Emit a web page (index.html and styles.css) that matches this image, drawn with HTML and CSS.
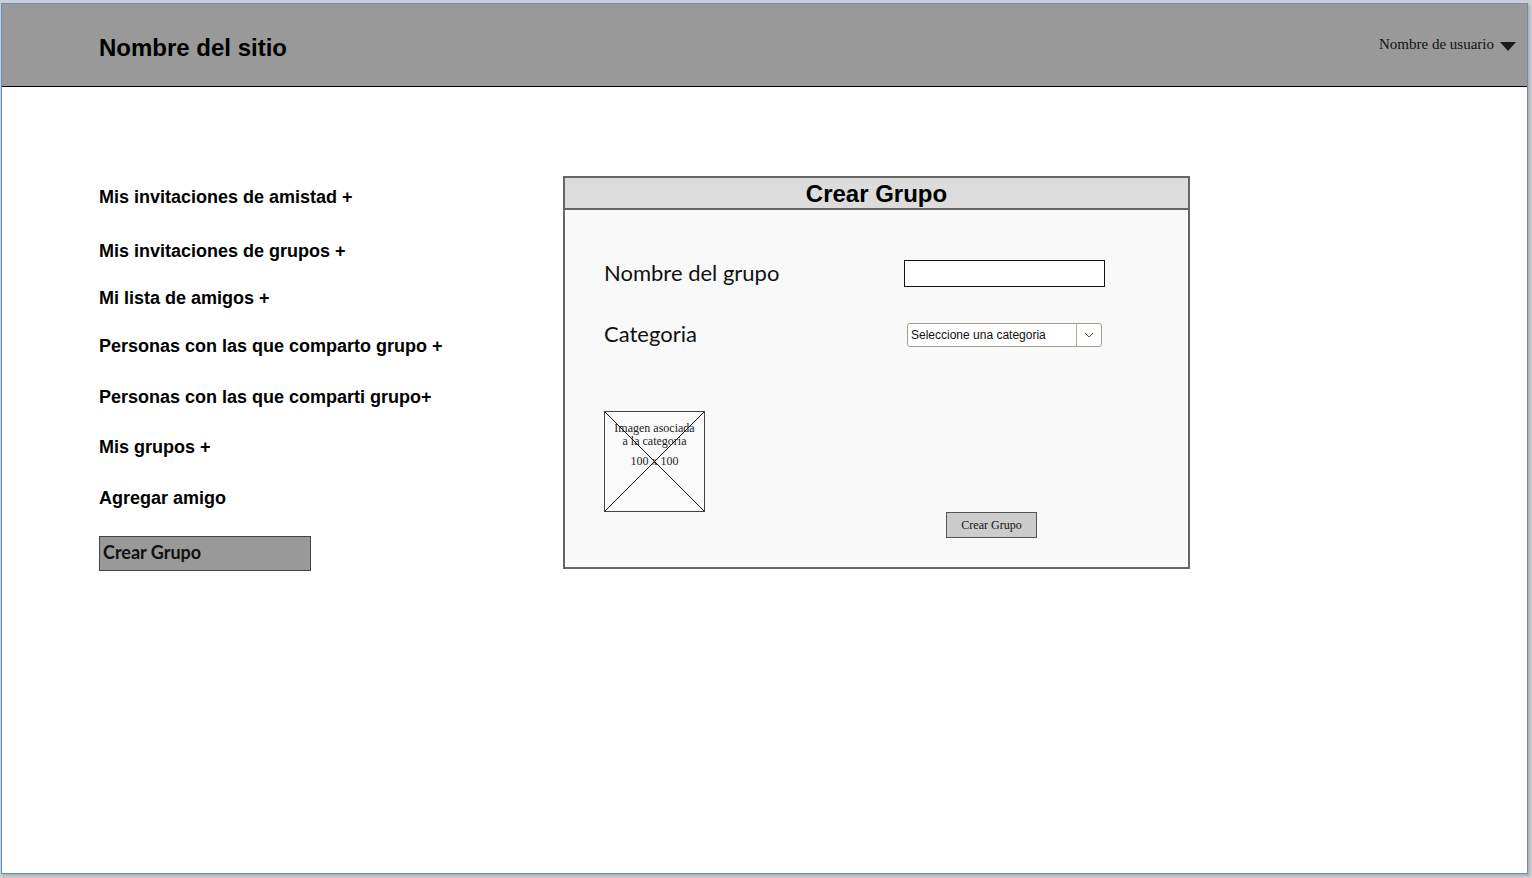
FILE: index.html
```html
<!DOCTYPE html>
<html lang="es">
<head>
<meta charset="utf-8">
<title>Crear Grupo</title>
<link rel="stylesheet" href="styles.css">
</head>
<body>
<div class="window">
  <header class="topbar">
    <div class="site-name">Nombre del sitio</div>
    <div class="user">
      <span class="user-name">Nombre de usuario</span>
      <span class="caret"></span>
    </div>
  </header>
  <main class="main">
    <nav class="nav">
      <div class="nav-item gap-32">Mis invitaciones de amistad +</div>
      <div class="nav-item gap-25">Mis invitaciones de grupos +</div>
      <div class="nav-item gap-26">Mi lista de amigos +</div>
      <div class="nav-item gap-29">Personas con las que comparto grupo +</div>
      <div class="nav-item gap-28">Personas con las que comparti grupo+</div>
      <div class="nav-item gap-29">Mis grupos +</div>
      <div class="nav-item gap-27">Agregar amigo</div>
      <div class="nav-active">Crear Grupo</div>
    </nav>
    <section class="panel">
      <div class="panel-head">Crear Grupo</div>
      <div class="panel-body">
        <div class="row">
          <div class="label">Nombre del grupo</div>
          <div class="input"></div>
        </div>
        <div class="row row-select">
          <div class="label label-wide">Categoria</div>
          <div class="select">
            <span class="select-text">Seleccione una categoria</span>
            <span class="select-btn">
              <svg width="10" height="6" viewBox="0 0 10 6"><path d="M1 1 L5 5 L9 1" fill="none" stroke="#555" stroke-width="1"/></svg>
            </span>
          </div>
        </div>
        <div class="row-bottom">
          <div class="placeholder">
            <svg class="ph-x" width="99" height="99" viewBox="0 0 99 99" preserveAspectRatio="none"><path d="M0 0 L99 99 M99 0 L0 99" stroke="#111" stroke-width="1" fill="none"/></svg>
            <div class="ph-text">Imagen asociada<br>a la categoria</div>
            <div class="ph-size">100 x 100</div>
          </div>
          <div class="btn">Crear Grupo</div>
        </div>
      </div>
    </section>
  </main>
</div>
</body>
</html>
```

FILE: styles.css
```css
html, body {
  margin: 0;
  padding: 0;
}
body {
  background: #cfcfcf;
  width: 1532px;
  height: 878px;
  overflow: hidden;
}
.window {
  margin: 3px 0 0 1px;
  width: 1527px;
  height: 871px;
  box-sizing: border-box;
  border: 1px solid #5f8fc8;
  background: #ffffff;
  box-shadow: 2px 2px 2px #b0b0b0;
}
.topbar {
  height: 82px;
  border-bottom: 1px solid #000;
  background: #999999;
  display: flex;
  justify-content: space-between;
  align-items: center;
  padding: 0 11px 0 97px;
}
.site-name {
  font-family: "Liberation Sans", Arial, sans-serif;
  font-weight: bold;
  font-size: 24px;
  color: #000;
  padding-top: 6px;
}
.user {
  display: flex;
  align-items: center;
  padding-bottom: 1px;
}
.user-name {
  font-family: "Liberation Serif", "Times New Roman", serif;
  font-size: 15px;
  color: #111;
}
.caret {
  margin-left: 6px;
  margin-top: 3px;
  width: 0;
  height: 0;
  border-left: 8px solid transparent;
  border-right: 8px solid transparent;
  border-top: 9px solid #1a1a1a;
}
.main {
  display: flex;
  padding: 89px 0 0 97px;
}
.nav {
  width: 464px;
  margin-top: 10px;
  display: flex;
  flex-direction: column;
}
.nav-item {
  font-family: "Liberation Sans", Arial, sans-serif;
  font-weight: bold;
  font-size: 18px;
  line-height: 22px;
  height: 22px;
  color: #000;
}
.gap-25 { margin-bottom: 25px; }
.gap-26 { margin-bottom: 26px; }
.gap-27 { margin-bottom: 27px; }
.gap-28 { margin-bottom: 28px; }
.gap-29 { margin-bottom: 29px; }
.gap-32 { margin-bottom: 32px; }
.nav-active {
  width: 212px;
  height: 35px;
  box-sizing: border-box;
  border: 1px solid #444;
  background: #999999;
  font-family: Lato, "Liberation Sans", sans-serif;
  font-weight: bold;
  font-size: 18px;
  line-height: 31px;
  padding-left: 3px;
  color: #111;
}
.panel {
  width: 627px;
  height: 393px;
  box-sizing: border-box;
  border: 2px solid #666;
  background: #f9f9f9;
  display: flex;
  flex-direction: column;
}
.panel-head {
  height: 30px;
  border-bottom: 2px solid #666;
  background: #dcdcdc;
  text-align: center;
  font-family: "Liberation Sans", Arial, sans-serif;
  font-weight: bold;
  font-size: 24px;
  line-height: 31px;
  color: #000;
}
.panel-body {
  padding: 50px 0 0 39px;
}
.row {
  display: flex;
  align-items: center;
  height: 27px;
}
.row-select {
  margin-top: 36px;
  height: 24px;
}
.label {
  width: 300px;
  font-family: Lato, "Liberation Sans", sans-serif;
  font-size: 22px;
  line-height: 26px;
  margin-top: -2px;
  color: #111;
}
.label-wide {
  width: 303px;
  margin-top: -3px;
}
.input {
  width: 201px;
  height: 27px;
  box-sizing: border-box;
  border: 1px solid #111;
  background: #fff;
}
.select {
  width: 195px;
  height: 24px;
  box-sizing: border-box;
  border: 1px solid #a59e90;
  border-radius: 3px;
  background: #fff;
  display: flex;
  align-items: center;
}
.select-text {
  flex: 1;
  padding-left: 3px;
  font-family: "Liberation Sans", Arial, sans-serif;
  font-size: 12px;
  color: #111;
}
.select-btn {
  width: 24px;
  height: 22px;
  border-left: 1px solid #b5afa3;
  display: flex;
  align-items: center;
  justify-content: center;
}
.row-bottom {
  display: flex;
  align-items: flex-start;
  margin-top: 64px;
}
.placeholder {
  position: relative;
  width: 101px;
  height: 101px;
  box-sizing: border-box;
  border: 1px solid #444;
  background: #fafafa;
  text-align: center;
  font-family: "Liberation Serif", "Times New Roman", serif;
  font-size: 12px;
  color: #222;
}
.ph-x {
  position: absolute;
  left: 0;
  top: 0;
}
.ph-text {
  position: relative;
  padding-top: 10px;
  line-height: 13px;
}
.ph-size {
  position: relative;
  margin-top: 7px;
  line-height: 13px;
}
.btn {
  margin-left: 241px;
  margin-top: 101px;
  width: 91px;
  height: 26px;
  box-sizing: border-box;
  border: 1px solid #555;
  background: #cccccc;
  font-family: "Liberation Serif", "Times New Roman", serif;
  font-size: 12px;
  line-height: 24px;
  text-align: center;
  color: #111;
}
```
